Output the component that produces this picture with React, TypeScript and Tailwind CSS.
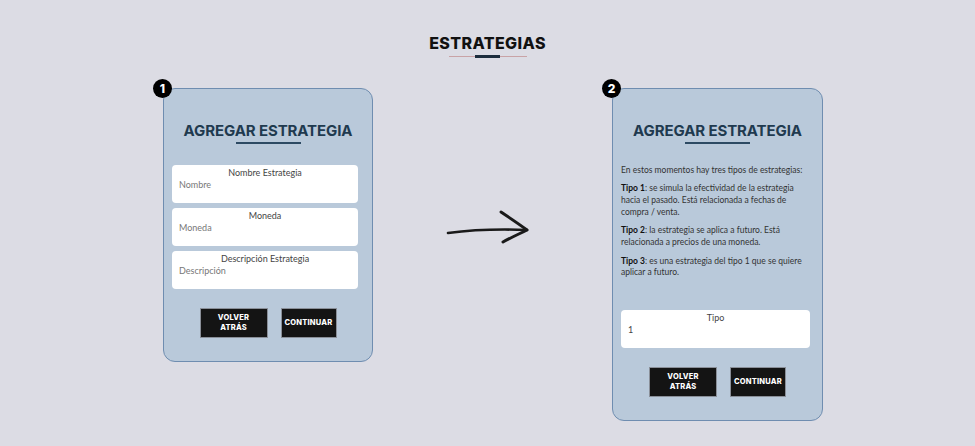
import React from "react";

const heading = { fontFamily: "Inter, 'Open Sans', sans-serif" };
const body = { fontFamily: "Lato, 'Open Sans', sans-serif" };

function Badge({ n }: { n: number }) {
  return (
    <div
      className="absolute -left-[11px] -top-[10px] w-[19px] h-[19px] rounded-full bg-black text-white flex items-center justify-center text-[12px] font-extrabold"
      style={heading}
    >
      {n}
    </div>
  );
}

function CardTitle() {
  return (
    <div className="flex flex-col items-center pt-[33px]">
      <h2 className="text-[15px] leading-[18px] font-bold text-[#1f3a4f] tracking-[-0.1px]" style={heading}>
        AGREGAR ESTRATEGIA
      </h2>
      <div className="mt-[2px] w-[65px] h-[2px] bg-[#2d4a63]" />
    </div>
  );
}

function Field({ label, value, muted = true }: { label: string; value: string; muted?: boolean }) {
  return (
    <div className="h-[38px] bg-white rounded-[4px] px-[7px] pt-[2px]" style={body}>
      <div className="text-center text-[9px] leading-[12px] text-[#444]">{label}</div>
      <div className={`text-[9px] leading-[12px] ${muted ? "text-[#777]" : "text-[#444]"}`}>{value}</div>
    </div>
  );
}

function Buttons() {
  return (
    <div className="flex justify-center gap-[13px]" style={heading}>
      <button className="w-[68px] h-[30px] bg-[#141414] border border-[#8a8f98] text-white text-[7.5px] leading-[10px] font-extrabold tracking-[0.2px]">
        VOLVER
        <br />
        ATRÁS
      </button>
      <button className="w-[56px] h-[30px] bg-[#141414] border border-[#8a8f98] text-white text-[7.5px] leading-[10px] font-extrabold tracking-[0.2px]">
        CONTINUAR
      </button>
    </div>
  );
}

function Arrow() {
  return (
    <svg width="86" height="40" viewBox="0 0 86 40" className="mt-[119px]">
      <path d="M2 26 C 25 23, 55 22, 81 23" fill="none" stroke="#1a1a1a" strokeWidth="2.6" strokeLinecap="round" />
      <path
        d="M55 5 C 64 11, 73 17, 81 23 C 73 27, 64 31, 57 35"
        fill="none"
        stroke="#1a1a1a"
        strokeWidth="3"
        strokeLinecap="round"
        strokeLinejoin="round"
      />
    </svg>
  );
}

export default function App() {
  return (
    <div className="w-[975px] h-[446px] bg-[#dcdce4] overflow-hidden">
      <div className="flex flex-col items-center pt-[34px]">
        <h1 className="text-[16px] leading-[18px] font-extrabold text-[#111] tracking-[0.4px]" style={heading}>
          ESTRATEGIAS
        </h1>
        <div className="mt-[3px] relative w-[78px] h-[2px] flex items-center justify-center">
          <div className="absolute inset-x-0 top-[0.5px] h-px bg-[#c9a3a6]" />
          <div className="relative w-[25px] h-[3px] bg-[#1d2d3d]" />
        </div>
      </div>

      <div className="flex items-start pl-[163px] mt-[31px]">
        <div className="relative w-[210px] bg-[#b9c9da] border-[1.5px] border-[#6f8db0] rounded-[12px] px-[8px] pb-[23px]">
          <Badge n={1} />
          <CardTitle />
          <div className="mt-[21px] mr-[6px] flex flex-col gap-[5px]">
            <Field label="Nombre Estrategia" value="Nombre" />
            <Field label="Moneda" value="Moneda" />
            <Field label="Descripción Estrategia" value="Descripción" />
          </div>
          <div className="mt-[19px]">
            <Buttons />
          </div>
        </div>

        <div className="ml-[73px]">
          <Arrow />
        </div>

        <div className="relative ml-[80px] w-[211px] bg-[#b9c9da] border-[1.5px] border-[#6f8db0] rounded-[12px] px-[8px] pb-[23px]">
          <Badge n={2} />
          <CardTitle />
          <div className="mt-[21px] text-[8.5px] leading-[11.7px] text-[#333]" style={body}>
            <p>En estos momentos hay tres tipos de estrategias:</p>
            <p className="mt-[6.5px]">
              <span className="font-bold text-[#111]">Tipo 1</span>: se simula la efectividad de la estrategia hacia
              el pasado. Está relacionada a fechas de compra / venta.
            </p>
            <p className="mt-[7px]">
              <span className="font-bold text-[#111]">Tipo 2</span>: la estrategia se aplica a futuro. Está
              relacionada a precios de una moneda.
            </p>
            <p className="mt-[7px]">
              <span className="font-bold text-[#111]">Tipo 3</span>: es una estrategia del tipo 1 que se quiere
              aplicar a futuro.
            </p>
          </div>
          <div className="mt-[31px] mr-[4px]">
            <Field label="Tipo" value="1" muted={false} />
          </div>
          <div className="mt-[19px]">
            <Buttons />
          </div>
        </div>
      </div>
    </div>
  );
}
